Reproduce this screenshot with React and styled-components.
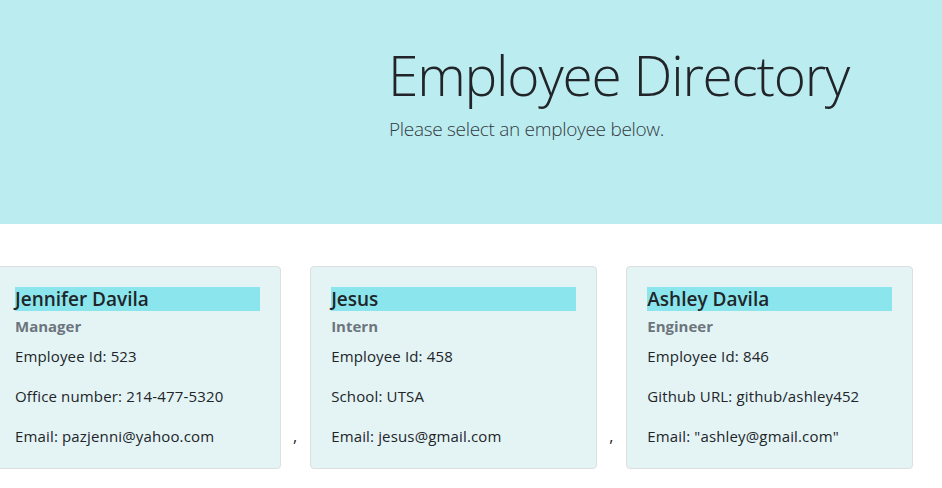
import styled, { createGlobalStyle } from "styled-components";

const GlobalStyle = createGlobalStyle`
  body {
    margin: 0;
    background: #ffffff;
    font-family: "Open Sans", "Noto Sans", sans-serif;
    color: #212529;
    overflow: hidden;
  }
`;

const Header = styled.header`
  height: 224px;
  box-sizing: border-box;
  background: #bbecf0;
  padding: 41px 0 0 388px;
`;

const Title = styled.h1`
  margin: 0;
  font-size: 55px;
  font-weight: 300;
  line-height: 67px;
  letter-spacing: -1.2px;
  color: #212529;
`;

const Lead = styled.p`
  margin: 9px 0 0 1px;
  font-size: 19px;
  font-weight: 300;
  line-height: 24px;
  letter-spacing: -0.3px;
  color: #343a40;
`;

const Row = styled.div`
  margin: 42px 0 0 -19px;
  white-space: nowrap;
  font-size: 16px;
`;

const Card = styled.div`
  display: inline-block;
  vertical-align: baseline;
  white-space: normal;
  width: 287px;
  box-sizing: border-box;
  margin: 0 12px 0 13px;
  padding: 20px;
  background: #e4f4f5;
  border: 1px solid #dcdfe0;
  border-radius: 4px;
`;

const Name = styled.h5`
  margin: 0 0 12px;
  font-size: 19px;
  font-weight: 600;
  line-height: 24px;
  background: #8ae6ec;
  color: #212529;
`;

const Role = styled.h6`
  margin: -6px 0 8px;
  font-size: 15px;
  font-weight: 700;
  line-height: 19px;
  color: #6c757d;
`;

const Info = styled.p`
  margin: 0 0 16px;
  font-size: 15px;
  line-height: 24px;
  letter-spacing: 0.15px;
  &:last-child {
    margin-bottom: 0;
  }
`;

const employees = [
  {
    name: "Jennifer Davila",
    role: "Manager",
    id: 523,
    extra: "Office number: 214-477-5320",
    email: "pazjenni@yahoo.com",
  },
  {
    name: "Jesus",
    role: "Intern",
    id: 458,
    extra: "School: UTSA",
    email: "jesus@gmail.com",
  },
  {
    name: "Ashley Davila",
    role: "Engineer",
    id: 846,
    extra: "Github URL: github/ashley452",
    email: '"ashley@gmail.com"',
  },
];

const EmployeeCard = ({ emp }) => (
  <Card>
    <Name>{emp.name}</Name>
    <Role>{emp.role}</Role>
    <Info>Employee Id: {emp.id}</Info>
    <Info>{emp.extra}</Info>
    <Info>Email: {emp.email}</Info>
  </Card>
);

const App = () => {
  return (
    <>
      <GlobalStyle />
      <Header>
        <Title>Employee Directory</Title>
        <Lead>Please select an employee below.</Lead>
      </Header>
      <Row>
        {employees.map((emp, i) => (
          <span key={emp.id}>
            {i > 0 && ","}
            <EmployeeCard emp={emp} />
          </span>
        ))}
      </Row>
    </>
  );
};

export default App;
